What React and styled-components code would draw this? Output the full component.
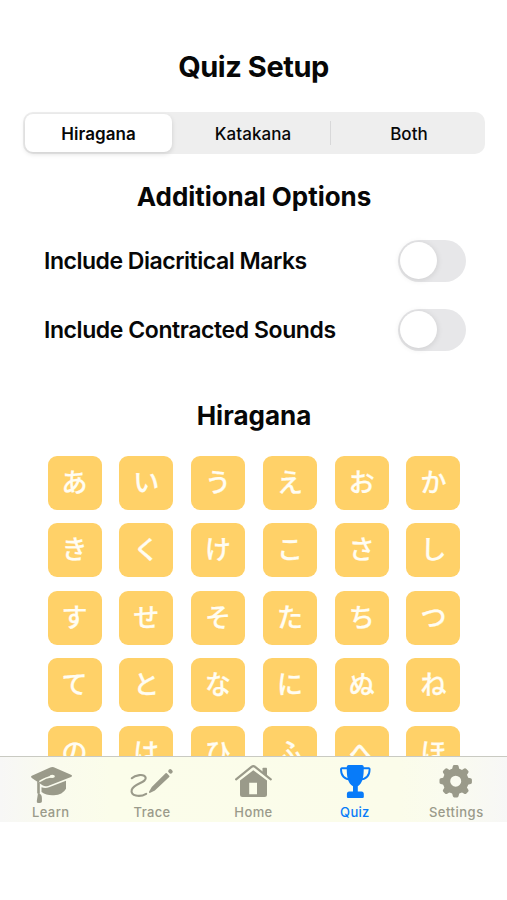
import React, { useState } from "react";
import styled, { createGlobalStyle } from "styled-components";

const GlobalStyle = createGlobalStyle`
  * { box-sizing: border-box; }
  body {
    margin: 0;
    background: #fff;
    font-family: Inter, "Noto Sans CJK JP", sans-serif;
    color: #070707;
  }
  button { font: inherit; color: inherit; border: 0; padding: 0; background: none; }
`;

const Screen = styled.div`
  display: flex;
  flex-direction: column;
  width: 507px;
  height: 822px;
  overflow: hidden;
`;

const Content = styled.main`
  flex: 1;
  min-height: 0;
  overflow: hidden;
  padding-top: 47px;
`;

const Title = styled.h1`
  margin: 0;
  height: 40px;
  line-height: 40px;
  text-align: center;
  font-size: 29px;
  font-weight: 650;
  letter-spacing: -0.45px;
`;

const Heading = styled.h2`
  margin: ${(p) => p.$top}px 0 0;
  height: 36px;
  line-height: 36px;
  padding-left: 1px;
  text-align: center;
  font-size: 26px;
  font-weight: 650;
  letter-spacing: ${(p) => p.$tracking}px;
`;

const Segmented = styled.div`
  display: flex;
  align-items: center;
  margin: 25px 22px 0 23px;
  height: 42px;
  padding: 2px 0 2px 2px;
  border-radius: 10px;
  background: #eeeeee;
`;

const Segment = styled.button`
  flex: none;
  width: ${(p) => p.$width}px;
  height: 38px;
  padding: 2px 0 0 ${(p) => p.$inset || 0}px;
  border-radius: 8px;
  background: ${(p) => (p.$active ? "#fff" : "transparent")};
  box-shadow: ${(p) => (p.$active ? "0 2px 5px rgba(0,0,0,.13)" : "none")};
  font-size: 17px;
  font-weight: ${(p) => (p.$active ? 600 : 500)};
  letter-spacing: 0.05px;
`;

const Divider = styled.span`
  width: 1px;
  height: 24px;
  background: #d8d8d9;
`;

const OptionRow = styled.div`
  display: flex;
  align-items: center;
  justify-content: space-between;
  height: 42px;
  margin: ${(p) => p.$top}px 41px 0 44px;
  font-size: 23px;
  font-weight: 570;
  letter-spacing: ${(p) => p.$tracking}px;
`;

const Switch = styled.button`
  display: flex;
  align-items: center;
  justify-content: ${(p) => (p.$on ? "flex-end" : "flex-start")};
  width: 68px;
  height: 42px;
  padding: 0 2px;
  border-radius: 21px;
  background: ${(p) => (p.$on ? "#34c759" : "#e7e7e9")};
`;

const Knob = styled.span`
  width: 37px;
  height: 37px;
  margin-top: -1px;
  border-radius: 50%;
  background: #fff;
  box-shadow: 0 1px 6px rgba(0, 0, 0, 0.12);
`;

const KanaGrid = styled.div`
  display: grid;
  grid-template-columns: repeat(6, 54px);
  grid-auto-rows: 54px;
  gap: 13.4px 17.8px;
  margin: 22px 0 0 47.5px;
`;

const KanaTile = styled.div`
  display: flex;
  align-items: center;
  justify-content: center;
  border-radius: 9px;
  background: #ffd168;
  color: #fffdf3;
  font-family: "Noto Sans CJK JP", sans-serif;
  font-size: 26px;
  font-weight: 500;
  line-height: 50px;
  padding-bottom: 4px;
  -webkit-text-stroke: 0.25px #fffdf3;
`;

const TabBar = styled.nav`
  display: grid;
  grid-template-columns: repeat(5, 1fr);
  height: 66px;
  flex: none;
  border-top: 1px solid #c9cac2;
  background: linear-gradient(90deg, #f7f7f6 0, #fafbed 60px, #fbfdea 110px, #fbfcea 400px, #fafbef 450px, #f7f7f6 100%);
`;

const Tab = styled.button`
  display: flex;
  flex-direction: column;
  align-items: center;
  padding-top: 3px;
  color: ${(p) => (p.$active ? "#087bf9" : "#9a9a8a")};
`;

const TabLabel = styled.span`
  margin-top: -1px;
  line-height: 19px;
  font-size: 13px;
  font-weight: 530;
  letter-spacing: ${(p) => p.$tracking}px;
`;

const Glyph = styled.svg`
  display: block;
  flex: none;
  width: 60px;
  height: 44px;
`;

const paper = "#fafcec";

const LearnIcon = () => (
  <Glyph viewBox="0 0 60 44" fill="currentColor">
    <path d="M10.8 15.8 29.2 7.4Q31 6.5 32.8 7.2L50 14.7Q52 15.8 50 17L27 25.9Q24 27 21.5 25.2L10.8 18Q9 16.8 10.8 15.8Z" />
    <path d="M20.5 27.3Q24.5 28.6 28 27.2L45 20.7V28.8Q41.5 35 33 35.2Q26 35.8 20.5 32Z" />
    <path d="M16.2 21.6 18.8 23.3V33.6H16.2Z" />
    <path d="M17 33Q20.9 33.8 20.9 38V41.6Q20.9 43 19 43H17Q15.5 43 15.8 41Z" />
    <path d="M31.5 16.5Q25 17.2 18.3 21.6" fill="none" stroke={paper} strokeWidth="1.5" />
    <ellipse cx="31.2" cy="16.3" rx="2.7" ry="1.6" fill={paper} />
  </Glyph>
);

const TraceIcon = () => (
  <Glyph viewBox="0 0 60 44" fill="none" stroke="currentColor" strokeLinecap="round" strokeLinejoin="round">
    <path d="M9.8 18.2C13 15 22 13.4 23.6 17.4C25.4 22.4 12 23.5 9.8 29.6C7.8 36.2 18 37.4 24.2 33.8" strokeWidth="2.1" />
    <path d="M27.9 32 30.4 27.6 44.2 14 46.6 16.4 32.5 29.7Z" fill="currentColor" strokeWidth="1.8" />
    <path d="m48.2 11.1.5.5" strokeWidth="4" />
  </Glyph>
);

const HomeIcon = () => (
  <Glyph viewBox="0 0 60 44" fill="currentColor">
    <path d="M13.1 19.3 28.5 6.8Q30.3 5.3 32.1 6.8L47.8 19.3" fill="none" stroke="currentColor" strokeWidth="2.2" strokeLinecap="round" />
    <path d="M39.5 8.5Q39.5 7.7 40.3 7.7H43.3Q44 7.7 44 8.5V16.2L39.5 12.6Z" />
    <path fillRule="evenodd" d="M17 20.4 30.3 10.2 44 20.4V34.5Q44 37 41.5 37H19.5Q17 37 17 34.5ZM26.2 22.7V34.2H34V22.7Z" />
  </Glyph>
);

const TrophyIcon = () => (
  <Glyph viewBox="0 0 60 44" fill="currentColor">
    <path d="M21.8 6.5Q22 5 23.5 5H37Q38.5 5 38.7 6.5C39 17 37.5 23.5 32.8 26.2V31.4H36.5Q38.8 31.4 38.8 34V37Q38.8 38 37.5 38H23Q21.9 38 21.9 37V34Q21.9 31.4 24.2 31.4H28V26.2C23 23.5 21.5 17 21.8 6.5Z" />
    <path d="M23 8.3H17Q15.9 8.3 16 9.5C16.1 16 19.5 19.4 26 19.5M37.5 8.3H43.7Q44.7 8.3 44.6 9.5C44.5 16 41 19.4 34.5 19.5" fill="none" stroke="currentColor" strokeWidth="1.9" />
  </Glyph>
);

const GearIcon = () => (
  <Glyph viewBox="0 0 60 44">
    <circle cx="29.7" cy="21.2" r="9.2" fill="none" stroke="currentColor" strokeWidth="7.4" />
    {[0, 45, 90, 135, 180, 225, 270, 315].map((angle) => (
      <path
        key={angle}
        d="M25.7 11 26.8 6.3Q27.1 5 28.3 5H31.1Q32.3 5 32.6 6.3L33.7 11Z"
        transform={`rotate(${angle} 29.7 21.2)`}
        fill="currentColor"
      />
    ))}
  </Glyph>
);

const kana = [..."あいうえおかきくけこさしすせそたちつてとなにぬねのはひふへほ"];

const tabs = [
  { label: "Learn", Icon: LearnIcon, tracking: 0.4 },
  { label: "Trace", Icon: TraceIcon, tracking: 0.35 },
  { label: "Home", Icon: HomeIcon, tracking: 0.4 },
  { label: "Quiz", Icon: TrophyIcon, tracking: 0.3 },
  { label: "Settings", Icon: GearIcon, tracking: 0.5 },
];

export default function App() {
  const [script, setScript] = useState("Hiragana");
  const [tab, setTab] = useState("Quiz");
  const [marks, setMarks] = useState(false);
  const [sounds, setSounds] = useState(false);

  return (
    <>
      <GlobalStyle />
      <Screen>
        <Content>
          <Title>Quiz Setup</Title>
          <Segmented>
            <Segment $width={147} $active={script === "Hiragana"} onClick={() => setScript("Hiragana")}>Hiragana</Segment>
            <Segment $width={158} $inset={4} $active={script === "Katakana"} onClick={() => setScript("Katakana")}>Katakana</Segment>
            <Divider />
            <Segment $width={154} $inset={2} $active={script === "Both"} onClick={() => setScript("Both")}>Both</Segment>
          </Segmented>
          <Heading $top={25} $tracking={-0.05}>Additional Options</Heading>
          <OptionRow $top={25} $tracking={-0.48}>
            Include Diacritical Marks
            <Switch $on={marks} onClick={() => setMarks(!marks)} aria-label="Include Diacritical Marks"><Knob /></Switch>
          </OptionRow>
          <OptionRow $top={27} $tracking={-0.42}>
            Include Contracted Sounds
            <Switch $on={sounds} onClick={() => setSounds(!sounds)} aria-label="Include Contracted Sounds"><Knob /></Switch>
          </OptionRow>
          <Heading $top={47} $tracking={0}>Hiragana</Heading>
          <KanaGrid>
            {kana.map((k) => <KanaTile key={k}>{k}</KanaTile>)}
          </KanaGrid>
        </Content>
        <TabBar>
          {tabs.map(({ label, Icon, tracking }) => (
            <Tab key={label} $active={tab === label} onClick={() => setTab(label)}>
              <Icon />
              <TabLabel $tracking={tracking}>{label}</TabLabel>
            </Tab>
          ))}
        </TabBar>
      </Screen>
    </>
  );
}
